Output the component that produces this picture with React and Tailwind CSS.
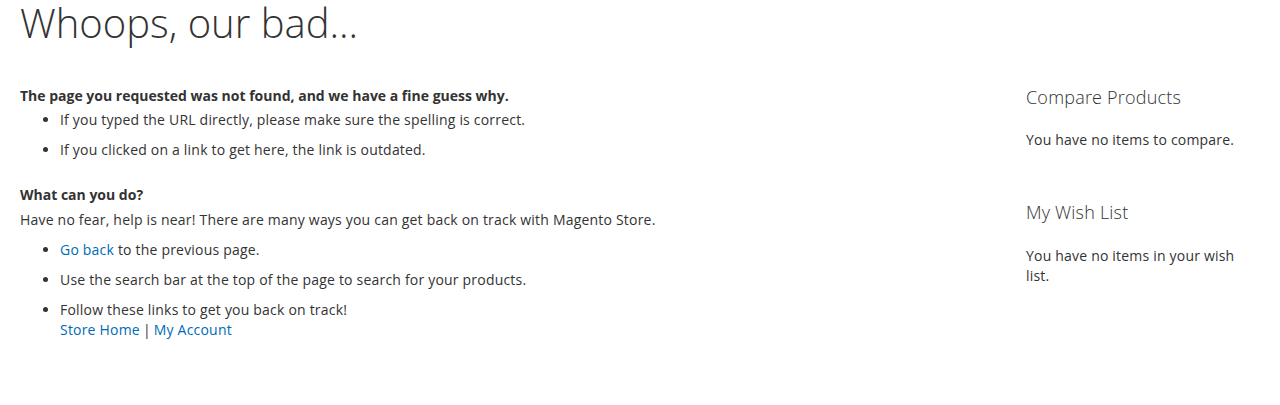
export default function App() {
  return (
    <div className="min-h-[405px] bg-white px-5 text-[14px] leading-[20px] tracking-[0.2px] text-[#333333] font-['Open_Sans',sans-serif]">
      <h1 className="mt-px text-[40px] leading-[1.1] font-light tracking-normal">Whoops, our bad...</h1>
      <div className="flex">
        <main className="flex-1 pt-[41px]">
          <dl>
            <dt className="font-bold tracking-normal">The page you requested was not found, and we have a fine guess why.</dt>
            <dd className="mt-1">
              <ul className="list-disc pl-10">
                <li className="mb-2.5">If you typed the URL directly, please make sure the spelling is correct.</li>
                <li className="mb-2.5">If you clicked on a link to get here, the link is outdated.</li>
              </ul>
            </dd>
            <dt className="mt-[25px] font-bold tracking-normal">What can you do?</dt>
            <dd className="mt-[5px]">
              Have no fear, help is near! There are many ways you can get back on track with Magento Store.
              <ul className="mt-2.5 list-disc pl-10">
                <li className="mb-2.5">
                  <a href="#" className="text-[#006bb4]">Go back</a> to the previous page.
                </li>
                <li className="mb-2.5">Use the search bar at the top of the page to search for your products.</li>
                <li>
                  Follow these links to get you back on track!
                  <br />
                  <a href="#" className="text-[#006bb4]">Store Home</a>
                  <span className="mx-[3px]">|</span>
                  <a href="#" className="text-[#006bb4]">My Account</a>
                </li>
              </ul>
            </dd>
          </dl>
        </main>
        <aside className="w-[234px] pt-[38px]">
          <section>
            <h2 className="text-[18px] leading-[28px] font-light">Compare Products</h2>
            <p className="mt-[19px]">You have no items to compare.</p>
          </section>
          <section className="mt-[48px]">
            <h2 className="text-[18px] leading-[28px] font-light">My Wish List</h2>
            <p className="mt-[20px]">You have no items in your wish list.</p>
          </section>
        </aside>
      </div>
    </div>
  );
}
